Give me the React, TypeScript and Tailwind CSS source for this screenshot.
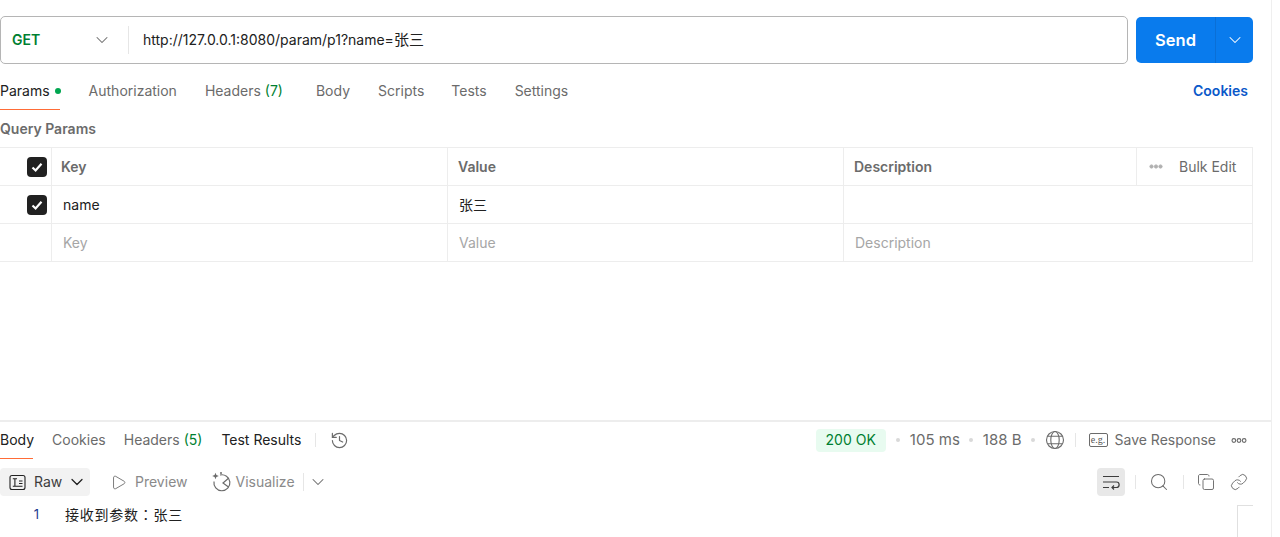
import { ChevronDown, Play, History, Search, Copy, Link } from 'lucide-react';

const font = { fontFamily: 'Inter, "Noto Sans CJK SC", sans-serif' };

const Check = () => (
  <span className="flex h-[20px] w-[20px] items-center justify-center rounded-[4px] bg-[#212121]">
    <svg width="14" height="14" viewBox="0 0 14 14" fill="none">
      <path d="M2.5 7.5 L5.6 10.5 L11.5 3.8" stroke="white" strokeWidth="2.2" />
    </svg>
  </span>
);

const Dots = ({ className, fill = 'none' }: { className: string; fill?: string }) => (
  <svg width="16" height="7" viewBox="0 0 14 6" fill={fill} className={className}>
    <circle cx="2.5" cy="3" r="1.6" stroke="currentColor" />
    <circle cx="7" cy="3" r="1.6" stroke="currentColor" />
    <circle cx="11.5" cy="3" r="1.6" stroke="currentColor" />
  </svg>
);

const Sep = ({ className }: { className: string }) => <span className={`w-px shrink-0 bg-[#e6e6e6] ${className}`} />;
const Dot = () => <span className="mx-[9.5px] block h-[4px] w-[4px] rounded-full bg-[#d9d9d9]" />;

const Row = ({ first, a, b, c, end }: { first?: React.ReactNode; a: React.ReactNode; b: React.ReactNode; c?: React.ReactNode; end?: React.ReactNode }) => (
  <div className="flex h-[38px] border-b border-[#ededed]">
    <div className="flex w-[52px] shrink-0 items-center justify-end border-r border-[#ededed] pr-[4px]">{first}</div>
    <div className="flex w-[396px] shrink-0 items-center border-r border-[#ededed] pl-[10px]">{a}</div>
    <div className="flex w-[396px] shrink-0 items-center border-r border-[#ededed] pl-[10px]">{b}</div>
    <div className="flex flex-1 items-center pl-[10px]">{c}</div>
    {end}
  </div>
);

export default function App() {
  return (
    <div style={font} className="h-[537px] w-[1280px] overflow-hidden bg-white text-[14px] leading-[20px] text-[#6b6b6b]">
      <div className="flex h-full w-[1272px] flex-col overflow-hidden border-r border-[#efefef]">
        {/* request bar */}
        <div className="flex h-[64px] shrink-0 items-end pr-[18px]">
          <div className="flex h-[48px] flex-1 items-center rounded-[5px] border border-[#b5b5b5]">
            <div className="flex h-[28px] w-[128px] shrink-0 items-center justify-between border-r border-[#e6e6e6] pl-[11px] pr-[16px]">
              <span className="font-semibold text-[#007f31]">GET</span>
              <ChevronDown size={20} strokeWidth={1.25} />
            </div>
            <span className="pl-[14px] text-[#212121]">http://127.0.0.1:8080/param/p1?name=<span className="text-[15px]">张三</span></span>
          </div>
          <div className="mb-[1px] ml-[8px] flex h-[46px] w-[117px] items-center rounded-[5px] bg-[#097bed] text-white">
            <span className="flex h-full w-[80px] items-center justify-center border-r border-[#0a6fd6] text-[16.5px] font-semibold">Send</span>
            <span className="flex flex-1 items-center justify-center"><ChevronDown size={20} strokeWidth={1.25} /></span>
          </div>
        </div>

        {/* request tabs */}
        <div className="flex h-[46px] shrink-0 items-center pr-[23px] pt-[8px]">
          <div className="relative flex h-full items-center">
            <span className="text-[#212121]">Params</span>
            <span className="ml-[5px] h-[6px] w-[6px] rounded-full bg-[#00a650]" />
            <span className="absolute bottom-0 left-0 h-[1px] w-[60px] bg-[#ff6c37]" />
          </div>
          <span className="ml-[28px]">Authorization</span>
          <span className="ml-[28px]">Headers <span className="text-[#007f31]">(7)</span></span>
          <span className="ml-[33px]">Body</span>
          <span className="ml-[28px]">Scripts</span>
          <span className="ml-[27px]">Tests</span>
          <span className="ml-[28px]">Settings</span>
          <span className="ml-auto font-semibold text-[#0a58c9]">Cookies</span>
        </div>

        <div className="flex h-[37px] shrink-0 items-center font-semibold">Query Params</div>

        {/* params table */}
        <div className="w-[1253px] shrink-0 border-r border-t border-[#ededed]">
          <Row
            first={<Check />}
            a={<span className="-ml-[1px] font-semibold">Key</span>}
            b={<span className="font-semibold">Value</span>}
            c={<span className="font-semibold">Description</span>}
            end={
              <div className="flex w-[116px] items-center border-l border-[#ededed] pl-[12px]">
                <Dots className="w-[14px] text-[#b0b0b0]" fill="#b0b0b0" />
                <span className="ml-[16px]">Bulk Edit</span>
              </div>
            }
          />
          <Row
            first={<Check />}
            a={<span className="pl-[1px] text-[#212121]">name</span>}
            b={<span className="pl-[1px] text-[#212121]">张三</span>}
          />
          <Row
            a={<span className="pl-[1px] text-[#a6a6a6]">Key</span>}
            b={<span className="pl-[1px] text-[#a6a6a6]">Value</span>}
            c={<span className="pl-[1px] text-[#a6a6a6]">Description</span>}
          />
        </div>

        {/* response */}
        <div className="mt-[158px] flex h-[39px] shrink-0 items-center border-t-2 border-[#ededed] pb-[1px] pr-[24px]">
          <div className="relative flex h-full items-center">
            <span className="text-[#212121]">Body</span>
            <span className="absolute -bottom-[1px] left-0 h-[1px] w-[33px] bg-[#ff6c37]" />
          </div>
          <span className="ml-[18px]">Cookies</span>
          <span className="ml-[18px]">Headers <span className="text-[#007f31]">(5)</span></span>
          <span className="ml-[19px] text-[#212121]">Test Results</span>
          <Sep className="ml-[14px] h-[14px]" />
          <History size={19} strokeWidth={1.5} className="ml-[14px]" />

          <span className="ml-auto mr-[1px] flex h-[23px] items-center rounded-[4px] bg-[#e8fbf0] px-[10px] text-[#007f31]">200 OK</span>
          <Dot />
          <span className="text-[15px]">105 ms</span>
          <Dot />
          <span className="text-[15px]">188 B</span>
          <Dot />
          <svg width="20" height="20" viewBox="0 0 20 20" fill="none" stroke="currentColor" strokeWidth="1.1">
            <circle cx="10" cy="10" r="8.5" />
            <ellipse cx="10" cy="10" rx="4.2" ry="8.5" />
            <path d="M2.6 6.2H17.4M2.6 13.8H17.4" />
          </svg>
          <Sep className="ml-[10px] mr-[13px] h-[14px]" />
          <span className="flex h-[14px] w-[19px] items-center justify-center rounded-[2px] border border-[#6b6b6b] text-[10px] leading-none text-[#555555]" style={{ fontFamily: '"Liberation Serif", serif' }}>e.g.</span>
          <span className="ml-[7px]">Save Response</span>
          <Dots className="ml-[15px] text-[#6b6b6b]" />
        </div>

        <div className="flex h-[46px] shrink-0 items-center pr-[23px]">
          <div className="flex h-[28px] w-[90px] items-center rounded-[4px] bg-[#f2f2f2] pl-[9px] text-[#212121]">
            <svg width="17" height="17" viewBox="0 0 17 17" fill="none" stroke="currentColor" strokeWidth="1.1">
              <rect x="1" y="1.5" width="15" height="14" rx="2" />
              <path d="M3.8 4.8H8M5.9 4.8V12M10 7H13.5M10 9.5H13.5M3.8 12.2H13.5" />
            </svg>
            <span className="ml-[8px] text-[#3d3d3d]">Raw</span>
            <ChevronDown size={20} strokeWidth={1.5} className="ml-[5px]" />
          </div>
          <Play size={17} strokeWidth={1.25} className="ml-[20px]" />
          <span className="ml-[8px] text-[#8a8a8a]">Preview</span>
          <svg width="20" height="20" viewBox="0 0 20 20" fill="none" stroke="currentColor" strokeWidth="1.2" className="ml-[23px]">
            <path d="M9 3A8 8 0 1 1 3 9.5" />
            <path d="M17.8 6L12 11L17.8 15.2" />
            <path d="M4.5 .8L5.4 3.1L7.8 4L5.4 4.9L4.5 7.2L3.6 4.9L1.2 4L3.6 3.1Z" fill="currentColor" stroke="none" />
            <circle cx="10" cy="1" r="1" fill="currentColor" stroke="none" />
          </svg>
          <span className="ml-[5px] text-[#8a8a8a]">Visualize</span>
          <Sep className="ml-[8px] h-[18px]" />
          <ChevronDown size={20} strokeWidth={1.25} className="ml-[4px]" />

          <span className="ml-auto flex h-[28px] w-[28px] items-center justify-center rounded-[4px] bg-[#e8e8e8]">
            <svg width="20" height="20" viewBox="0 0 20 20" fill="none" stroke="#3d3d3d" strokeWidth="1.2">
              <path d="M2 4.5H18M2 10H15.5C19 10 19 15.5 15.5 15.5H11M13 13.5L11 15.5L13 17.5M2 15.5H8" />
            </svg>
          </span>
          <Sep className="ml-[10px] h-[14px]" />
          <Search size={20} strokeWidth={1.25} className="ml-[13px]" />
          <Sep className="ml-[14px] h-[14px]" />
          <Copy size={18} strokeWidth={1.25} className="ml-[13px]" />
          <Link size={18} strokeWidth={1.25} className="ml-[15px]" />
        </div>

        <div className="flex items-start">
          <span className="w-[39px] text-right text-[13px] leading-[19px] text-[#1a3a8f]">1</span>
          <span className="ml-[26px] text-[14px] leading-[19px] tracking-[0.75px] text-[#212121]" style={{ fontFamily: '"Noto Sans CJK SC", sans-serif' }}>
            接收到参数<span style={{ fontFamily: '"Noto Sans CJK TC", sans-serif' }}>：</span>张三
          </span>
          <span className="ml-auto mr-[18px] h-[32px] w-[16px] border-l border-t border-[#e0e0e0]" />
        </div>
      </div>
    </div>
  );
}
